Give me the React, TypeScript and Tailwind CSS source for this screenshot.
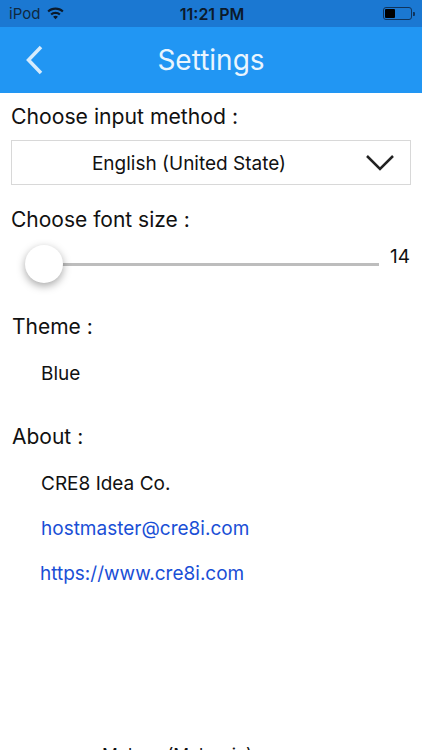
const font = "font-['Inter','Noto_Sans',sans-serif]"

function StatusBar() {
  return (
    <div className="flex h-[27px] items-center justify-between bg-[#1b78d2] pl-[9px] pr-[7px] text-[#0b1a2b]">
      <div className="flex w-[120px] items-center gap-[7px]">
        <span className="text-[15px] leading-none text-[#10283f]">iPod</span>
        <svg width="17" height="13" viewBox="0 0 17 13" fill="#0b1a2b">
          <path d="M8.5 0.5C5.3 0.5 2.5 1.7 0.4 3.7l1.5 1.6C3.6 3.7 5.9 2.7 8.5 2.7s4.900 1 6.600 2.600l1.500-1.600C14.500 1.700 11.700 0.500 8.500 0.500z" />
          <path d="M8.500 4.700c-2 0-3.800 0.800-5.100 2l1.500 1.600c0.900-0.900 2.200-1.400 3.600-1.400s2.700 0.500 3.600 1.400l1.500-1.600c-1.300-1.200-3.100-2-5.100-2z" />
          <path d="M8.500 8.700c-1 0-1.800 0.400-2.400 1l2.400 2.600 2.400-2.600c-0.600-0.600-1.400-1-2.400-1z" />
        </svg>
      </div>
      <span className="text-[16px] font-semibold leading-none">11:21 PM</span>
      <div className="flex w-[120px] items-center justify-end">
        <div className="flex h-[13px] w-[29px] items-center rounded-[3px] border border-[#10345c] p-[1px]">
          <div className="h-full w-[10px] rounded-[1px] bg-black" />
        </div>
        <div className="ml-[1px] h-[4px] w-[2px] rounded-r-[1px] bg-[#10345c]" />
      </div>
    </div>
  )
}

function Header() {
  return (
    <div className="relative flex h-[66px] items-center justify-center bg-[#2196f3]">
      <svg className="absolute left-[25px] top-[18px]" width="18" height="30" viewBox="0 0 18 30" fill="none" stroke="#d6ebfc" strokeWidth="3.500">
        <path d="M16 2 L3.500 15 L16 28" />
      </svg>
      <span className="text-[28px] leading-none text-[#e9f5fe]">Settings</span>
    </div>
  )
}

export default function App() {
  return (
    <div className={`${font} h-[750px] w-[422px] overflow-hidden bg-white text-[#111]`}>
      <StatusBar />
      <Header />

      <div className="px-[12px] pt-[11px]">
        <p className="-ml-[1px] text-[21.200px] leading-[24px]">Choose input method :</p>
        <div className="relative -mx-[1px] mt-[12px] flex h-[45px] items-center justify-center border-[1.500px] border-[#d8d8d8] pr-[44px] pt-[3px] text-[19px]">
          <span>English (United State)</span>
          <svg className="absolute right-[15px] top-[13px]" width="30" height="17" viewBox="0 0 30 17" fill="none" stroke="#222" strokeWidth="2.500">
            <path d="M2 2 L15 15 L28 2" />
          </svg>
        </div>

        <p className="-ml-[1px] mt-[23px] text-[21px] leading-[24px]">Choose font size :</p>
        <div className="mt-[12px] flex h-[40px] items-center">
          <div className="relative ml-[14px] h-[3px] w-[353px] bg-[#bdbdbd]">
            <div className="absolute left-[-1px] top-[-18px] h-[38px] w-[38px] rounded-full bg-white shadow-[0_3px_8px_rgba(0,0,0,0.35)]" />
          </div>
          <span className="ml-[11px] pb-[16px] text-[19px] leading-none">14</span>
        </div>

        <p className="mt-[31px] text-[21px] leading-[24px]">Theme :</p>
        <p className="mt-[24px] pl-[29px] text-[19px] leading-[22px]">Blue</p>

        <p className="mt-[40px] text-[21px] leading-[24px]">About :</p>
        <p className="mt-[24px] pl-[29px] text-[19px] leading-[22px]">CRE8 Idea Co.</p>
        <p className="mt-[23px] pl-[29px] text-[19px] leading-[22px] text-[#1a4fd6]">hostmaster@cre8i.com</p>
        <p className="mt-[23px] pl-[28px] text-[19px] leading-[22px] text-[#1a4fd6]">https://www.cre8i.com</p>

        <p className="mt-[159px] pl-[90px] text-[17.500px] leading-[22px]">Melayu (Malaysia)</p>
      </div>
    </div>
  )
}
